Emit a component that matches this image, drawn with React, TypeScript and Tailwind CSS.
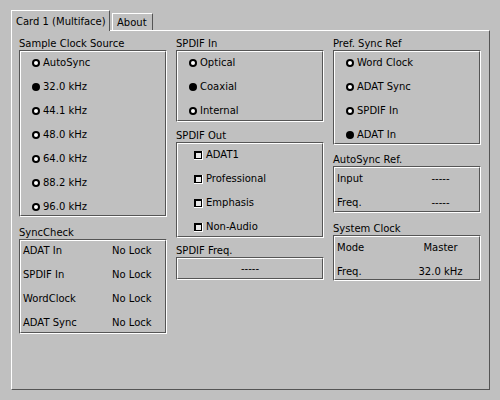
import type { ReactNode } from 'react'
import { clsx } from 'clsx'

function Etched({ children, className }: { children: ReactNode; className?: string }) {
  return (
    <div className="border border-t-[#555555] border-l-[#555555] border-b-white border-r-white">
      <div
        className={clsx(
          'border border-t-white border-l-white border-b-[#555555] border-r-[#555555]',
          className
        )}
      >
        {children}
      </div>
    </div>
  )
}

function Frame({ title, children, className }: { title: string; children: ReactNode; className?: string }) {
  return (
    <div>
      <div className="h-[13px] leading-[13px] whitespace-nowrap">{title}</div>
      <Etched className={className}>{children}</Etched>
    </div>
  )
}

function Radio({ label, on }: { label: string; on?: boolean }) {
  return (
    <div className="flex items-center h-[14px] pl-[11px]">
      <span className="w-[8px] h-[8px] rounded-full bg-black flex items-center justify-center shrink-0">
        {!on && <span className="w-[4px] h-[4px] rounded-full bg-white" />}
      </span>
      <span className="ml-[3px]">{label}</span>
    </div>
  )
}

function Check({ label }: { label: string }) {
  return (
    <div className="flex items-center h-[14px] pl-[16px]">
      <span className="w-[9px] h-[9px] shrink-0 border-r border-b border-r-white border-b-white">
        <span className="block w-[8px] h-[8px] border border-black border-t-2 border-l-2 bg-[#e8e8e8]" />
      </span>
      <span className="ml-[3px]">{label}</span>
    </div>
  )
}

function Pair({ k, v, cols, center }: { k: string; v: string; cols: string; center?: boolean }) {
  return (
    <div className={clsx('grid h-[14px] items-center pl-[2px]', cols)}>
      <span>{k}</span>
      <span className={clsx(center && 'text-center')}>{v}</span>
    </div>
  )
}

const rates = ['32.0 kHz', '44.1 kHz', '48.0 kHz', '64.0 kHz', '88.2 kHz', '96.0 kHz']

export default function App() {
  return (
    <div className="w-[500px] h-[400px] bg-[#c0c0c0] pt-[10px] pl-[11px] text-[10px] leading-[14px] text-black font-['DejaVu_Sans',sans-serif] overflow-hidden">
      {/* Tabs */}
      <div className="flex items-end h-[20px] relative z-10">
        <div className="w-[99px] h-[21px] -mb-px bg-[#c0c0c0] border-l border-t border-r border-l-white border-t-white border-r-[#555555] pl-[4px] pt-[4px] whitespace-nowrap">
          Card 1 (Multiface)
        </div>
        <div className="ml-[2px] w-[41px] h-[17px] border-l border-t border-r border-l-white border-t-white border-r-[#555555] pl-[4px] pt-[2px]">
          About
        </div>
      </div>

      {/* Notebook page */}
      <div className="w-[479px] h-[360px] border border-t-white border-l-white border-r-[#555555] border-b-[#555555] pl-[7px] pt-[6px] flex gap-[9px]">
        {/* Left column */}
        <div className="w-[148px] flex flex-col">
          <Frame title="Sample Clock Source" className="pt-[4px] pb-[1px] flex flex-col gap-[10px]">
            <Radio label="AutoSync" />
            {rates.map((r, i) => (
              <Radio key={r} label={r} on={i === 0} />
            ))}
          </Frame>
          <div className="mt-[9px]">
            <Frame title="SyncCheck" className="pt-[3px] pb-[2px] flex flex-col gap-[10px]">
              <Pair k="ADAT In" v="No Lock" cols="grid-cols-[89px_1fr]" />
              <Pair k="SPDIF In" v="No Lock" cols="grid-cols-[89px_1fr]" />
              <Pair k="WordClock" v="No Lock" cols="grid-cols-[89px_1fr]" />
              <Pair k="ADAT Sync" v="No Lock" cols="grid-cols-[89px_1fr]" />
            </Frame>
          </div>
        </div>

        {/* Middle column */}
        <div className="w-[148px] flex flex-col">
          <Frame title="SPDIF In" className="pt-[4px] pb-[2px] flex flex-col gap-[10px]">
            <Radio label="Optical" />
            <Radio label="Coaxial" on />
            <Radio label="Internal" />
          </Frame>
          <div className="mt-[7px]">
            <Frame title="SPDIF Out" className="pt-[4px] pb-[2px] flex flex-col gap-[10px]">
              <Check label="ADAT1" />
              <Check label="Professional" />
              <Check label="Emphasis" />
              <Check label="Non-Audio" />
            </Frame>
          </div>
          <div className="mt-[6px]">
            <Frame title="SPDIF Freq." className="h-[21px] pt-[1px] flex items-center justify-center">
              <span>-----</span>
            </Frame>
          </div>
        </div>

        {/* Right column */}
        <div className="w-[148px] flex flex-col">
          <Frame title="Pref. Sync Ref" className="pt-[4px] pb-[1px] flex flex-col gap-[10px]">
            <Radio label="Word Clock" />
            <Radio label="ADAT Sync" />
            <Radio label="SPDIF In" />
            <Radio label="ADAT In" on />
          </Frame>
          <div className="mt-[8px]">
            <Frame title="AutoSync Ref." className="pt-[4px] pb-[1px] flex flex-col gap-[10px]">
              <Pair k="Input" v="-----" cols="grid-cols-[65px_1fr]" center />
              <Pair k="Freq." v="-----" cols="grid-cols-[65px_1fr]" center />
            </Frame>
          </div>
          <div className="mt-[9px]">
            <Frame title="System Clock" className="pt-[4px] pb-[0px] flex flex-col gap-[10px]">
              <Pair k="Mode" v="Master" cols="grid-cols-[65px_1fr]" center />
              <Pair k="Freq." v="32.0 kHz" cols="grid-cols-[65px_1fr]" center />
            </Frame>
          </div>
        </div>
      </div>
    </div>
  )
}
